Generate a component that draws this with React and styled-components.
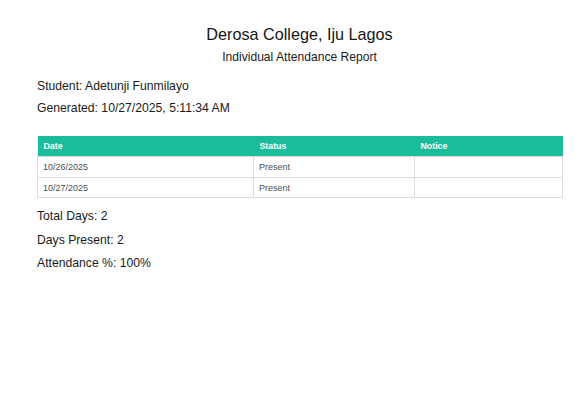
import styled, { createGlobalStyle } from "styled-components";

const GlobalStyle = createGlobalStyle`
  html, body {
    margin: 0;
    padding: 0;
    background: #ffffff;
  }
  body {
    font-family: "Liberation Sans", Arial, sans-serif;
    color: #1a1a1a;
  }
`;

const Page = styled.div`
  width: 583px;
  height: 396px;
  box-sizing: border-box;
  padding: 23.8px 21px 0 37px;
  background: #ffffff;
`;

const Title = styled.h1`
  margin: 0;
  font-size: 16.2px;
  line-height: 20px;
  font-weight: 400;
  text-align: center;
  color: #151515;
`;

const Subtitle = styled.h2`
  margin: 5.7px 0 0;
  font-size: 12.1px;
  line-height: 16px;
  font-weight: 400;
  text-align: center;
  color: #1a1a1a;
`;

const Info = styled.div`
  display: flex;
  flex-direction: column;
  margin-top: ${(p) => p.$top || 0}px;
`;

const Line = styled.p`
  margin: 0;
  font-size: 12.2px;
  line-height: ${(p) => p.$lh || 22.5}px;
  color: #1a1a1a;
`;

const Table = styled.table`
  width: 525px;
  margin-top: 16.9px;
  border-collapse: collapse;
  table-layout: fixed;
  font-size: 9px;
`;

const HeadCell = styled.th`
  width: ${(p) => p.$w}px;
  height: 20.5px;
  padding: 0 6px;
  box-sizing: border-box;
  background: #1abc9c;
  color: #ffffff;
  font-size: 8.8px;
  font-weight: 700;
  text-align: left;
`;

const Cell = styled.td`
  height: 20.5px;
  padding: 0 5px;
  box-sizing: border-box;
  border: 1px solid #dcdcdc;
  color: #505050;
`;

const columns = [
  { label: "Date", width: 216 },
  { label: "Status", width: 161 },
  { label: "Notice", width: 148 },
];

const rows = [
  { date: "10/26/2025", status: "Present", notice: "" },
  { date: "10/27/2025", status: "Present", notice: "" },
];

export default function App() {
  return (
    <>
      <GlobalStyle />
      <Page>
        <Title>Derosa College, Iju Lagos</Title>
        <Subtitle>Individual Attendance Report</Subtitle>
        <Info $top={9.1}>
          <Line>Student: Adetunji Funmilayo</Line>
          <Line>Generated: 10/27/2025, 5:11:34 AM</Line>
        </Info>
        <Table>
          <thead>
            <tr>
              {columns.map((c) => (
                <HeadCell key={c.label} $w={c.width}>
                  {c.label}
                </HeadCell>
              ))}
            </tr>
          </thead>
          <tbody>
            {rows.map((r) => (
              <tr key={r.date}>
                <Cell>{r.date}</Cell>
                <Cell>{r.status}</Cell>
                <Cell>{r.notice}</Cell>
              </tr>
            ))}
          </tbody>
        </Table>
        <Info $top={7}>
          <Line $lh={23.4}>Total Days: 2</Line>
          <Line $lh={23.4}>Days Present: 2</Line>
          <Line $lh={23.4}>Attendance %: 100%</Line>
        </Info>
      </Page>
    </>
  );
}
